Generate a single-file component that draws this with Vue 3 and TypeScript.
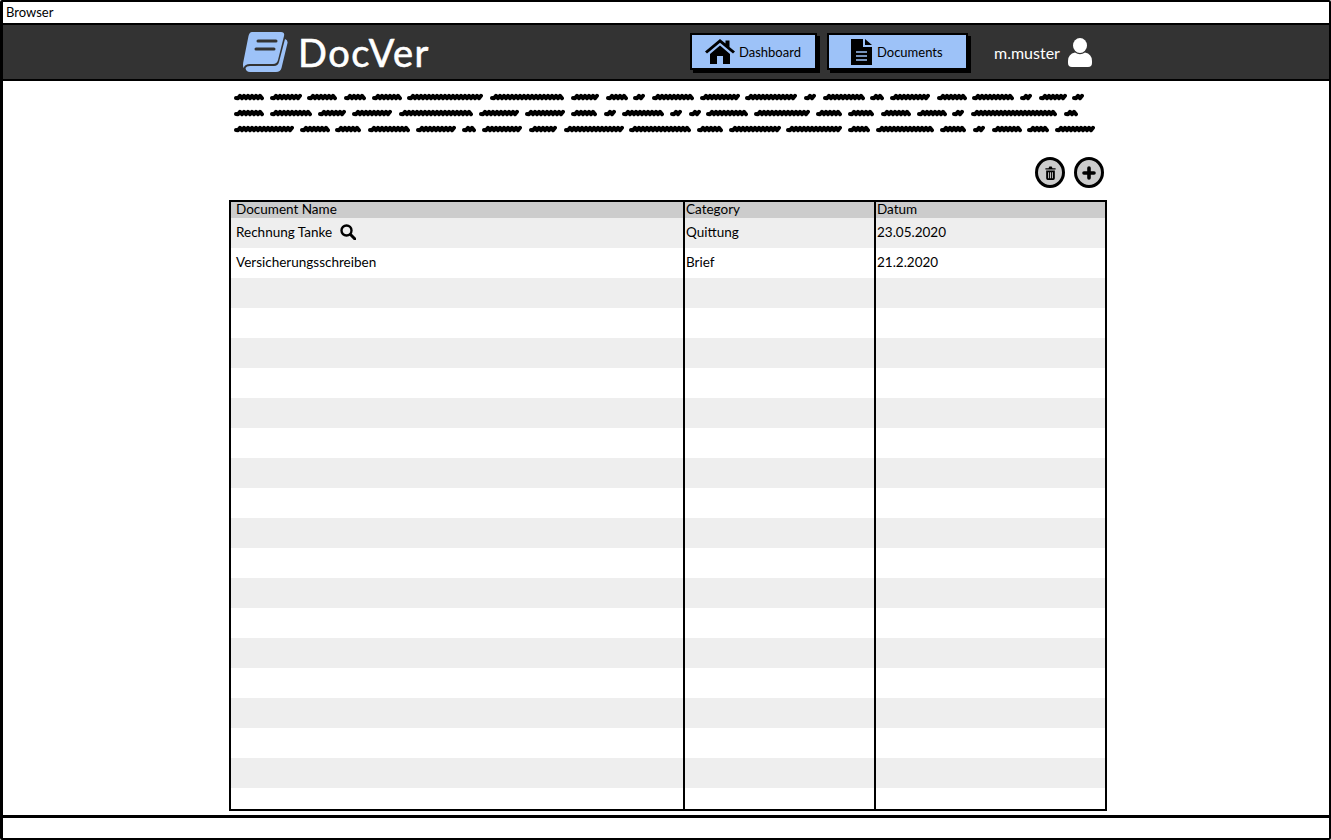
<script setup lang="ts">
interface Row {
  name: string
  search?: boolean
  category: string
  date: string
}

const scribbleLines: number[][] = [
  [30, 32, 31, 22, 30, 77, 75, 29, 22, 13, 42, 40, 53, 13, 42, 14, 41, 30, 42, 13, 28, 13],
  [30, 43, 28, 41, 75, 40, 40, 27, 13, 42, 13, 12, 42, 56, 27, 27, 30, 30, 13, 87, 14],
  [60, 30, 27, 42, 41, 14, 41, 29, 60, 62, 26, 52, 56, 22, 59, 27, 13, 30, 22, 40],
]

// wavy stroke standing in for one blurred word
function squiggle(width: number): string {
  let d = 'M2 5'
  for (let x = 4; x < width - 1; x += 2) {
    d += ` L${x} ${x % 4 ? 2.8 : 5.2}`
  }
  return d
}

const rows: Row[] = [
  { name: 'Rechnung Tanke', search: true, category: 'Quittung', date: '23.05.2020' },
  { name: 'Versicherungsschreiben', category: 'Brief', date: '21.2.2020' },
  ...Array.from({ length: 18 }, () => ({ name: '', category: '', date: '' })),
]
</script>

<template>
  <div class="browser">
    <div class="title-bar">Browser</div>

    <header class="top-bar">
      <div class="top-inner">
        <div class="brand">
          <svg class="logo" width="47" height="42" viewBox="0 0 47 42">
            <path d="M10 1 H39 Q43 1 42 5 L36 29 Q35 33 31 33 H8 Q3 33 1.5 37 Q0.5 34 1.5 30 L6.5 5 Q7.5 1 10 1 Z" fill="#9dc2f8" />
            <path d="M3.5 37 Q4.5 35 8 35 H32 Q36 35 37 31 L43 8 Q46 9 45.5 12 L39.5 37 Q38.5 41 34 41 H8 Q4 41 3.5 37 Z" fill="#9dc2f8" />
            <path d="M16 10 H34 M14 18 H32" stroke="#333" stroke-width="3" stroke-linecap="round" />
          </svg>
          <span class="brand-name">DocVer</span>
        </div>

        <nav class="nav">
          <a class="nav-btn dashboard">
            <svg width="30" height="25" viewBox="0 0 30 25">
              <path d="M0 12.5 L15 0 L20.5 4.5 V1.5 H24.5 V8 L30 12.5 L28 14.5 L15 3.8 L2 14.5 Z" fill="#000" />
              <path d="M5 15 L15 6.5 L25 15 V25 H18 V17 H12 V25 H5 Z" fill="#000" />
            </svg>
            Dashboard
          </a>
          <a class="nav-btn documents">
            <svg width="21" height="26" viewBox="0 0 21 26">
              <path d="M0 0 H12 V8 H21 V26 H0 Z" fill="#000" />
              <path d="M14 0 L21 6 H14 Z" fill="#000" />
              <path d="M5 13 H16 M5 17 H16 M5 21 H16" stroke="#9dc2f8" stroke-width="1.4" />
            </svg>
            Documents
          </a>
        </nav>

        <div class="user">
          <span>m.muster</span>
          <svg width="24" height="29" viewBox="0 0 24 29">
            <ellipse cx="12" cy="7.5" rx="7" ry="7.5" fill="#fff" />
            <path d="M7 14.5 Q12 18 17 14.5 Q24 16 24 23 V25 Q24 29 20 29 H4 Q0 29 0 25 V23 Q0 16 7 14.5 Z" fill="#fff" />
          </svg>
        </div>
      </div>
    </header>

    <main class="content">
      <div class="scribble">
        <div v-for="(line, i) in scribbleLines" :key="i" class="scribble-line">
          <svg v-for="(w, j) in line" :key="j" :width="w" height="8" :viewBox="`0 0 ${w} 8`">
            <path :d="squiggle(w)" fill="none" stroke="#000" stroke-width="4" stroke-linecap="round" stroke-linejoin="round" />
          </svg>
        </div>
      </div>

      <div class="actions">
        <button class="round-btn" type="button">
          <svg width="11" height="14" viewBox="0 0 14 16" preserveAspectRatio="none">
            <path d="M0.5 2.5 H4.5 L5.5 0.5 H8.5 L9.5 2.5 H13.5 V4 H0.5 Z" fill="#000" />
            <path d="M1.5 5 H12.5 V14 Q12.5 16 10.5 16 H3.5 Q1.5 16 1.5 14 Z M4 7 V14 H5.2 V7 Z M6.4 7 V14 H7.6 V7 Z M8.8 7 V14 H10 V7 Z" fill="#000" fill-rule="evenodd" />
          </svg>
        </button>
        <button class="round-btn" type="button">
          <svg width="14" height="14" viewBox="0 0 14 14">
            <path d="M7 2 V12 M2 7 H12" stroke="#000" stroke-width="3.6" stroke-linecap="round" />
          </svg>
        </button>
      </div>

      <div class="table">
        <div class="row head">
          <div class="cell">Document Name</div>
          <div class="cell">Category</div>
          <div class="cell">Datum</div>
        </div>
        <div v-for="(row, i) in rows" :key="i" class="row" :class="{ odd: i % 2 === 0 }">
          <div class="cell name">
            {{ row.name }}
            <svg v-if="row.search" class="search" width="16" height="16" viewBox="0 0 16 16">
              <circle cx="6.5" cy="6.5" r="5" fill="none" stroke="#000" stroke-width="2.4" />
              <path d="M10.5 10.5 L15 15" stroke="#000" stroke-width="3" stroke-linecap="round" />
            </svg>
          </div>
          <div class="cell">{{ row.category }}</div>
          <div class="cell">{{ row.date }}</div>
        </div>
      </div>
    </main>

    <footer class="status-bar"></footer>
  </div>
</template>

<style>
html,
body {
  margin: 0;
  background: #fff;
}
</style>

<style scoped>
.browser {
  box-sizing: border-box;
  width: 1331px;
  height: 840px;
  border: 2px solid #000;
  border-left-width: 3px;
  border-radius: 2px;
  display: flex;
  flex-direction: column;
  font-family: Lato, "Noto Sans", sans-serif;
  color: #000;
  overflow: hidden;
}

.title-bar {
  height: 21px;
  padding-left: 3px;
  font-size: 13px;
  line-height: 21px;
  flex: none;
}

.top-bar {
  flex: none;
  box-sizing: border-box;
  height: 58px;
  background: #333;
  border-top: 2px solid #000;
  border-bottom: 2px solid #000;
}

.top-inner {
  display: flex;
  align-items: center;
  height: 100%;
  padding-left: 239px;
}

.brand {
  display: flex;
  align-items: center;
  gap: 9px;
  width: 448px;
}

.brand-name {
  color: #fff;
  font-size: 38px;
  font-weight: 400;
  letter-spacing: 1.5px;
  -webkit-text-stroke: 0.6px #fff;
}

.nav {
  display: flex;
  gap: 10px;
  margin-top: -1px;
}

.nav-btn {
  box-sizing: border-box;
  height: 37px;
  display: flex;
  align-items: center;
  background: #9dc2f8;
  border: 2px solid #000;
  box-shadow: 3px 3px 0 #000;
  font-size: 13px;
}

.dashboard {
  width: 127px;
  padding-left: 13px;
  gap: 4px;
}

.documents {
  width: 141px;
  padding-left: 22px;
  gap: 5px;
}

.user {
  display: flex;
  align-items: center;
  gap: 8px;
  margin-left: 26px;
  color: #fff;
  font-size: 16px;
}

.content {
  flex: 1;
  display: flex;
  flex-direction: column;
  padding-left: 226px;
  min-height: 0;
}

.scribble {
  padding: 12px 0 0 5px;
  display: flex;
  flex-direction: column;
  gap: 8px;
}

.scribble-line {
  display: flex;
  gap: 5.7px;
  height: 8px;
}

.scribble-line svg {
  flex: none;
  filter: blur(0.4px);
}

.actions {
  display: flex;
  justify-content: flex-end;
  gap: 9px;
  width: 875px;
  margin-top: 24px;
}

.round-btn {
  box-sizing: border-box;
  width: 30px;
  height: 31px;
  border-radius: 50%;
  border: 3px solid #000;
  background: #ccc;
  padding: 0;
  display: flex;
  align-items: center;
  justify-content: center;
}

.table {
  box-sizing: border-box;
  width: 878px;
  margin-top: 12px;
  height: 611px;
  border: 2px solid #000;
  overflow: hidden;
}

.row {
  display: grid;
  grid-template-columns: 454px 191px 1fr;
  height: 30px;
  font-size: 13.5px;
}

.row.head {
  height: 16px;
  background: #ccc;
  line-height: 14px;
}

.row.odd {
  background: #eee;
}

.cell {
  display: flex;
  align-items: center;
  gap: 8px;
  padding: 0 0 2px 1px;
  border-right: 2px solid #000;
}

.cell:first-child {
  padding-left: 5px;
}

.cell:last-child {
  border-right: 0;
  padding-left: 1px;
}

.status-bar {
  flex: none;
  height: 20px;
  border-top: 3px solid #000;
}
</style>
